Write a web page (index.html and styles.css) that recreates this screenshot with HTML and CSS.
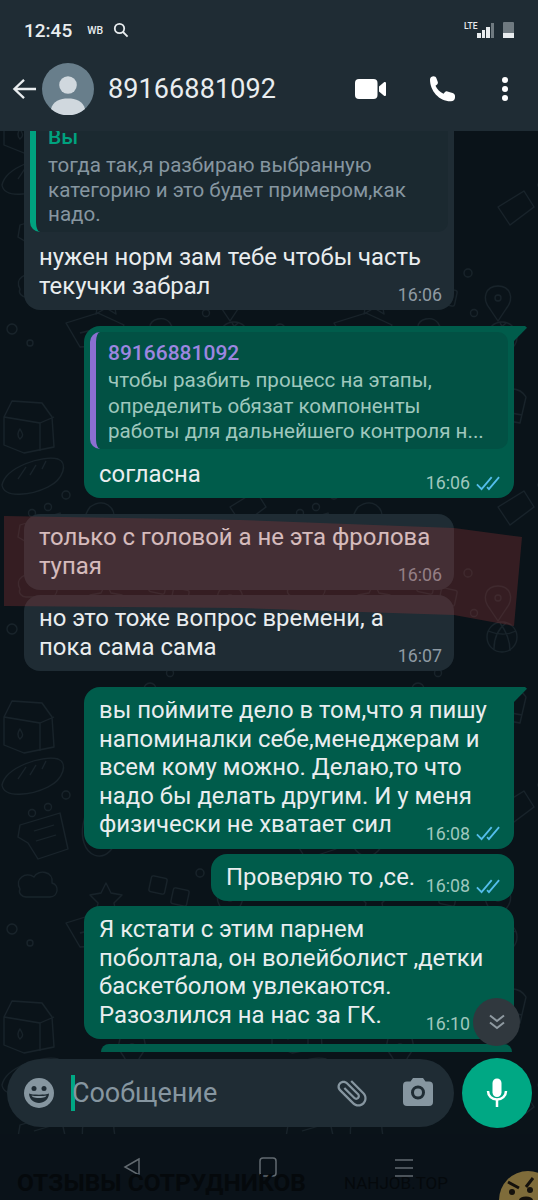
FILE: index.html
```html
<!DOCTYPE html>
<html lang="ru">
  <head>
    <meta charset="utf-8" />
    <title>89166881092</title>
    <link rel="stylesheet" href="styles.css">
  </head>
  <body>
    <div class="phone">
      <header class="top">
        <div class="status-bar">
          <span class="clock">12:45</span>
          <span class="wb">WB</span>
          <svg class="status-search" viewBox="0 0 16 16"><circle cx="6.500" cy="6.500" r="4.700" /><path d="M10 10l4.600 4.600" /></svg>
          <span class="status-right">
            <span class="lte">LTE</span>
            <span class="signal"><i class="s1"></i><i class="s2"></i><i class="s3"></i><i class="s4"></i></span>
            <span class="battery"><i></i></span>
          </span>
        </div>
        <div class="toolbar">
          <svg class="back" viewBox="0 0 26 24"><path d="M25 12H3M12.500 2.500L2.500 12l10 9.500" /></svg>
          <svg class="avatar" viewBox="0 0 52 52">
            <circle cx="26" cy="26" r="26" fill="#687e8b" />
            <circle cx="26" cy="22" r="8.800" fill="#d0d8de" />
            <path d="M9 46c2-8 9-10.500 17-10.500S41 38 43 46a26 26 0 0 1-34 0z" fill="#d0d8de" />
          </svg>
          <span class="contact">89166881092</span>
          <svg class="video" viewBox="0 0 31 20"><rect width="22.500" height="20" rx="4" /><path d="M24 7.500l5-4.300c.8-.6 2-.1 2 .9v11.800c0 1-1.200 1.500-2 .9l-5-4.300z" /></svg>
          <svg class="call" viewBox="0 0 27 26"><path d="M1 3.500C1 1.500 3 .3 4.500.3 6 .3 7 1 7.500 2.500l1.300 3.600c.3.900 0 1.800-.7 2.400l-1.600 1.300c1.600 3.500 4.400 6.200 8 7.900l1.500-1.700c.6-.7 1.500-.9 2.400-.6l5.200 1.700c1.500.5 2.400 1.500 2.400 3v1.300c0 2.200-1.700 3.900-4 3.900C10.500 25.600 1 15 1 3.500z" /></svg>
          <span class="dots"><i></i><i></i><i></i></span>
        </div>
      </header>

      <main class="chat">
        <svg class="wallpaper" width="538" height="1003">
          <defs>
            <pattern id="doodles" width="268" height="300" patternUnits="userSpaceOnUse" patternTransform="translate(0 -74)">
              <g fill="none" stroke="#18232a" stroke-width="1.300" stroke-linejoin="round">
                <path d="M4 60l8-16 30 2 10 14 2 30-30 6-20-8zM12 44l-8 16 36 6 14-6M40 66v28" />
                <path d="M20 72c3 5 4 7 0 10-3-3-3-6 0-10z" />
                <path d="M2 128c4-18 40-30 56-26 10 4 6 20-10 28-16 8-44 12-46-2z" />
                <path d="M18 122l8-12M30 118l6-10M42 112l4-8" />
                <path d="M20 168l40-12 8 36-30 10-10-16-10-6zM34 174l20-6M36 184l20-6" />
                <circle cx="66" cy="138" r="4" /><circle cx="48" cy="150" r="3.500" /><circle cx="32" cy="156" r="3.500" />
                <path d="M106 40l4 13 13 4-13 4-4 13-4-13-13-4 13-4z" />
                <circle cx="150" cy="32" r="6" /><circle cx="170" cy="16" r="3.500" /><circle cx="178" cy="50" r="4.500" />
                <path d="M124 100c-10-12-4-26 8-26s18 14 8 26l-8 14z" /><circle cx="132" cy="90" r="3" />
                <path d="M90 150c14-10 26 0 24 14-2 12 6 20-4 30s-22 4-26-8 0-28 6-36z" />
                <circle cx="150" cy="164" r="4" />
                <path d="M228 40c8-12 24-10 30 0l-6 26-22-4zM232 54l22 4" />
                <path d="M230 150l26-16 10 16-24 18z" />
                <path d="M20 232c-6-10 6-18 14-12 4-8 20-6 18 6 8 2 6 14-2 14H26c-4 0-8-4-6-8z" />
                <path d="M106 226l5 10 11 2-8 8 2 11-10-6-10 6 2-11-8-8 11-2z" />
                <rect x="150" y="220" width="16" height="16" rx="2" transform="rotate(12 158 228)" />
                <rect x="172" y="232" width="16" height="16" rx="2" transform="rotate(12 180 240)" />
                <circle cx="200" cy="216" r="4" /><circle cx="206" cy="256" r="3.500" />
                <path d="M222 252c-9-11-4-23 8-23s17 12 8 23l-8 12z" /><circle cx="230" cy="241" r="3" />
                <circle cx="234" cy="280" r="15" />
                <path d="M220 274c10 4 20 4 28 0M226 292c0-12 4-20 12-26M242 294c0-10-4-20-10-28" />
                <path d="M66 266l32-10 26 12-14 20-30 2zM80 276l24-6" />
                <path d="M150 270c0-8 14-12 20-4s-2 22-10 26c-6-4-10-14-10-22z" />
                <circle cx="12" cy="272" r="5" /><circle cx="30" cy="286" r="3" />
              </g>
            </pattern>
          </defs>
          <rect width="538" height="1003" fill="url(#doodles)" />
        </svg>

        <div class="messages">
          <div class="bubble in first">
            <div class="quote q-in">
              <div class="quote-name you">Вы</div>
              <div class="quote-text">тогда так,я разбираю выбранную<br>категорию и это будет примером,как<br>надо.</div>
            </div>
            <p class="body">нужен норм зам тебе чтобы часть<br>текучки забрал</p>
            <span class="meta">16:06</span>
          </div>

          <div class="bubble out tail quoted">
            <div class="quote q-out">
              <div class="quote-name num">89166881092</div>
              <div class="quote-text">чтобы разбить процесс на этапы,<br>определить обязат компоненты<br>работы для дальнейшего контроля н...</div>
            </div>
            <p class="body">согласна</p>
            <span class="meta">16:06 <svg class="ticks" viewBox="0 0 26 16"><path d="M1 9l5 5L17 1M12 12l2 2L25 1" /></svg></span>
          </div>

          <div class="bubble in gap-big">
            <p class="body">только с головой а не эта фролова<br>тупая</p>
            <span class="meta">16:06</span>
          </div>
          <div class="bubble in">
            <p class="body">но это тоже вопрос времени, а<br>пока сама сама</p>
            <span class="meta">16:07</span>
          </div>

          <div class="bubble out tail gap-big">
            <p class="body">вы поймите дело в том,что я пишу<br>напоминалки себе,менеджерам и<br>всем кому можно. Делаю,то что<br>надо бы делать другим. И у меня<br>физически не хватает сил</p>
            <span class="meta">16:08 <svg class="ticks" viewBox="0 0 26 16"><path d="M1 9l5 5L17 1M12 12l2 2L25 1" /></svg></span>
          </div>
          <div class="bubble out short">
            <p class="body">Проверяю то ,се.</p>
            <span class="meta">16:08 <svg class="ticks" viewBox="0 0 26 16"><path d="M1 9l5 5L17 1M12 12l2 2L25 1" /></svg></span>
          </div>
          <div class="bubble out">
            <p class="body">Я кстати с этим парнем<br>поболтала, он волейболист ,детки<br>баскетболом увлекаются.<br>Разозлился на нас за ГК.</p>
            <span class="meta">16:10 <svg class="ticks" viewBox="0 0 26 16"><path d="M1 9l5 5L17 1M12 12l2 2L25 1" /></svg></span>
          </div>
        </div>

        <div class="next-bubble"></div>

        <svg class="stripe" viewBox="0 0 538 130" width="538" height="130"><path d="M4 0l236 4 214 8 68 9-8 89-60-11-214-7-236-2z" /></svg>

        <div class="scroll-down">
          <svg viewBox="0 0 20 20"><path d="M3 3.500l7 5.500 7-5.500M3 10.500l7 5.500 7-5.500" /></svg>
        </div>

        <div class="composer">
          <div class="input">
            <svg class="emoji" viewBox="0 0 30 30">
              <circle cx="15" cy="15" r="15" fill="#8696a0" />
              <circle cx="10" cy="10.500" r="2.500" fill="#1f2c34" />
              <circle cx="20" cy="10.500" r="2.500" fill="#1f2c34" />
              <path d="M5 15.500c3 1.600 17 1.600 20 0-.3 6-5 9.500-10 9.500S5.300 21.500 5 15.500z" fill="#1f2c34" />
              <path d="M7.500 17.500c3 .8 12 .8 15 0-.8 1.500-2 2.500-7.500 2.500s-6.700-1-7.500-2.500z" fill="#8696a0" />
            </svg>
            <span class="caret"></span>
            <span class="placeholder">Сообщение</span>
            <svg class="clip" viewBox="0 0 24 24"><path d="M16.500 6v11.500c0 2.210-1.790 4-4 4s-4-1.790-4-4V5c0-1.380 1.120-2.500 2.500-2.500s2.500 1.120 2.500 2.500v10.500c0 .55-.45 1-1 1s-1-.45-1-1V6H10v9.500c0 1.380 1.120 2.500 2.500 2.500s2.500-1.120 2.500-2.500V5c0-2.210-1.790-4-4-4S7 2.790 7 5v12.500c0 3.040 2.460 5.500 5.500 5.500s5.500-2.460 5.500-5.500V6h-1.500z" /></svg>
            <svg class="camera" viewBox="0 0 30 28"><path fill-rule="evenodd" d="M10 0h10l2.500 3.500H26a4 4 0 0 1 4 4V24a4 4 0 0 1-4 4H4a4 4 0 0 1-4-4V7.500a4 4 0 0 1 4-4h3.500zM15 21.500a7 7 0 1 0 0-14 7 7 0 0 0 0 14zm0-3a4 4 0 1 1 0-8 4 4 0 0 1 0 8z" /></svg>
          </div>
          <div class="mic">
            <svg viewBox="0 0 24 30"><path d="M12 19c2.500 0 4.500-2 4.500-4.500V5C16.500 2.500 14.500.5 12 .5S7.500 2.500 7.500 5v9.500C7.500 17 9.500 19 12 19z" /><path d="M21 13c0 4.800-4 8.500-9 8.500S3 17.800 3 13" class="mic-arc" /><path d="M12 21v8" class="mic-arc" /></svg>
          </div>
        </div>
      </main>

      <footer class="nav">
        <div class="nav-icons">
          <svg viewBox="0 0 18 20"><path d="M16 2L2 10l14 8z" /></svg>
          <svg viewBox="0 0 18 20"><rect x="1" y="1" width="16" height="18" rx="3" /></svg>
          <svg viewBox="0 0 18 20"><path d="M0 3h18M0 11h18M0 19h18" /></svg>
        </div>
        <div class="ad">
          <span class="ad-title">ОТЗЫВЫ СОТРУДНИКОВ</span>
          <span class="ad-site">NAHJOB.TOP</span>
        </div>
        <svg class="ad-face" viewBox="0 0 39 29">
          <circle cx="29" cy="29" r="29" fill="#7f6c3a" />
          <path d="M9 11l11 6M27 16l7-9" stroke="#14110c" stroke-width="3" />
          <circle cx="13" cy="21" r="3" fill="#14110c" />
          <circle cx="31" cy="19" r="3" fill="#14110c" />
          <ellipse cx="27" cy="29" rx="7" ry="3.500" fill="#14110c" />
        </svg>
      </footer>
    </div>
  </body>
</html>
```

FILE: styles.css
```css
* {
  box-sizing: border-box;
}
body {
  margin: 0;
  background: #0a1319;
  font-family: Roboto, "Noto Sans", sans-serif;
}
.phone {
  width: 538px;
  height: 1200px;
  display: flex;
  flex-direction: column;
  overflow: hidden;
}

/* top bars */
.top {
  height: 131px;
  flex: none;
  background: #1f2c34;
  color: #e9edef;
  position: relative;
  z-index: 3;
}
.status-bar {
  height: 60px;
  padding: 0 24px;
  display: flex;
  align-items: center;
}
.clock {
  font-size: 19px;
  font-weight: 500;
}
.wb {
  font-size: 10.500px;
  font-weight: 500;
  margin-left: 15px;
}
.status-search {
  width: 16px;
  height: 16px;
  margin-left: 10px;
  fill: none;
  stroke: #e9edef;
  stroke-width: 1.800;
}
.status-right {
  margin-left: auto;
  display: flex;
  align-items: flex-end;
  height: 16px;
}
.lte {
  font-size: 8.500px;
  font-weight: 500;
  line-height: 9px;
  align-self: flex-start;
}
.signal {
  display: flex;
  align-items: flex-end;
  gap: 1px;
}
.signal i {
  display: block;
  width: 3.400px;
  background: #e9edef;
}
.signal .s1 {
  height: 5px;
}
.signal .s2 {
  height: 8px;
}
.signal .s3 {
  height: 11px;
}
.signal .s4 {
  height: 15px;
  background: #6f7a80;
}
.battery {
  width: 11px;
  height: 16px;
  margin-left: 9px;
  background: #6f7a80;
  border-radius: 1px;
  display: flex;
  align-items: flex-end;
}
.battery i {
  display: block;
  width: 100%;
  height: 5px;
  background: #e9edef;
}
.toolbar {
  height: 58px;
  padding-left: 12px;
  display: flex;
  align-items: center;
}
.back {
  width: 25px;
  height: 24px;
  fill: none;
  stroke: #e9edef;
  stroke-width: 2.400;
  flex: none;
}
.avatar {
  width: 52px;
  height: 52px;
  margin-left: 5px;
  flex: none;
}
.contact {
  font-size: 27px;
  margin-left: 14px;
  letter-spacing: 0.100px;
  flex: 1;
}
.video {
  width: 31px;
  height: 20px;
  fill: #fff;
  flex: none;
}
.call {
  width: 27px;
  height: 26px;
  fill: #fff;
  margin-left: 43px;
  flex: none;
}
.dots {
  display: flex;
  flex-direction: column;
  gap: 3px;
  margin: 0 30px 0 46px;
}
.dots i {
  display: block;
  width: 6px;
  height: 6px;
  border-radius: 50%;
  background: #fff;
}

/* chat */
.chat {
  flex: 1;
  position: relative;
  overflow: hidden;
  background: #0a1319;
}
.wallpaper {
  position: absolute;
  left: 0;
  top: 0;
}
.messages {
  position: relative;
  display: flex;
  flex-direction: column;
  align-items: flex-start;
  gap: 5px;
  padding: 0 24px;
  height: 100%;
}
.bubble {
  position: relative;
  width: 430px;
  padding: 0 15px;
  background: #1f2c34;
  border-radius: 16px;
  color: #e9edef;
}
.bubble.first {
  margin-top: -16px;
  padding: 6px 6px 0;
  height: 195px;
}
.bubble.out {
  align-self: flex-end;
  background: #005c4b;
}
.bubble.short {
  width: 303px;
}
.bubble.quoted {
  padding: 6px 6px 0;
  height: 172px;
  margin-top: 11px;
}
.bubble.gap-big {
  margin-top: 11px;
}
.bubble.tail {
  border-top-right-radius: 0;
}
.bubble.tail::after {
  content: "";
  position: absolute;
  top: 0;
  left: 100%;
  width: 13px;
  height: 15px;
  background: #005c4b;
  clip-path: polygon(0 0, 85% 0, 100% 12%, 0 100%);
}
.body {
  margin: 0;
  padding: 9px 0 10px;
  font-size: 23.900px;
  line-height: 28.500px;
}
.first .body,
.quoted .body {
  padding: 11px 9px 0;
}
.meta {
  position: absolute;
  right: 12px;
  bottom: 6px;
  font-size: 17.800px;
  line-height: 18px;
  color: #8e9aa3;
  display: flex;
  align-items: center;
  gap: 6px;
}
.out .meta {
  right: 14px;
  color: #9fc7bd;
}
.ticks {
  width: 24px;
  height: 15px;
  fill: none;
  stroke: #53bdeb;
  stroke-width: 2;
}
.quote {
  position: relative;
  border-radius: 10px;
  border-left: 6px solid;
  padding: 0 10px 0 12px;
}
.q-in {
  height: 111px;
  background: #1b2930;
  border-color: #00a27f;
}
.q-out {
  height: 117px;
  padding-top: 7px;
  background: #025144;
  border-color: #8b6fd1;
}
.quote-name {
  font-size: 21px;
  font-weight: 500;
  line-height: 28px;
}
.quote-name.you {
  color: #00a27f;
  height: 32px;
  line-height: 32px;
}
.quote-name.num {
  color: #9c86e0;
  margin-bottom: 1px;
}
.quote-text {
  font-size: 20.600px;
  line-height: 25.500px;
}
.q-in .quote-text {
  line-height: 24.600px;
  color: #8696a0;
}
.q-out .quote-text {
  color: #9fc7bd;
}
.next-bubble {
  position: absolute;
  left: 101px;
  top: 913px;
  width: 411px;
  height: 8px;
  background: #005c4b;
  border-radius: 10px 10px 0 0;
}
.stripe {
  position: absolute;
  left: 0;
  top: 385px;
  pointer-events: none;
}
.stripe path {
  fill: #a53a3a;
  fill-opacity: 0.280;
}
.scroll-down {
  position: absolute;
  left: 473px;
  top: 867px;
  width: 47px;
  height: 48px;
  border-radius: 50%;
  background: #30383e;
  display: flex;
  align-items: center;
  justify-content: center;
}
.scroll-down svg {
  width: 20px;
  height: 20px;
  fill: none;
  stroke: #8f9aa1;
  stroke-width: 2;
}
.composer {
  position: absolute;
  left: 7px;
  bottom: 6px;
  display: flex;
  align-items: center;
  gap: 7.600px;
}
.input {
  width: 447px;
  height: 68px;
  border-radius: 34px;
  background: #1f2c34;
  display: flex;
  align-items: center;
  padding: 0 21px 0 16.700px;
}
.emoji {
  width: 30px;
  height: 30px;
  flex: none;
}
.caret {
  width: 3.500px;
  height: 36px;
  background: #00a884;
  margin-left: 17.700px;
  flex: none;
}
.placeholder {
  font-size: 27px;
  color: #8696a0;
  margin-left: -3px;
  flex: 1;
}
.clip {
  width: 36px;
  height: 36px;
  fill: #8696a0;
  transform: rotate(-45deg);
  flex: none;
}
.camera {
  width: 30px;
  height: 28px;
  fill: #8696a0;
  margin: 0 0 2px 33px;
  flex: none;
}
.mic {
  width: 70px;
  height: 70px;
  border-radius: 50%;
  background: #00a884;
  display: flex;
  align-items: center;
  justify-content: center;
  flex: none;
}
.mic svg {
  width: 24px;
  height: 30px;
  fill: #fff;
}
.mic-arc {
  fill: none;
  stroke: #fff;
  stroke-width: 2.500;
}

/* phone nav with the page behind it */
.nav {
  height: 66px;
  flex: none;
  background: #0a1219;
  position: relative;
  overflow: hidden;
}
.nav-icons {
  display: flex;
  gap: 118px;
  padding: 23px 0 0 123px;
}
.nav-icons svg {
  width: 18px;
  height: 20px;
  fill: none;
  stroke: #626a70;
  stroke-width: 1.500;
}
.ad {
  position: absolute;
  left: 17px;
  top: 34px;
  display: flex;
  align-items: center;
  color: #05090c;
}
.ad-title {
  font-size: 24.500px;
  font-weight: 700;
}
.ad-site {
  font-size: 17px;
  margin-left: 38px;
}
.ad-face {
  position: absolute;
  right: 0;
  bottom: 0;
  width: 39px;
  height: 29px;
}
```
